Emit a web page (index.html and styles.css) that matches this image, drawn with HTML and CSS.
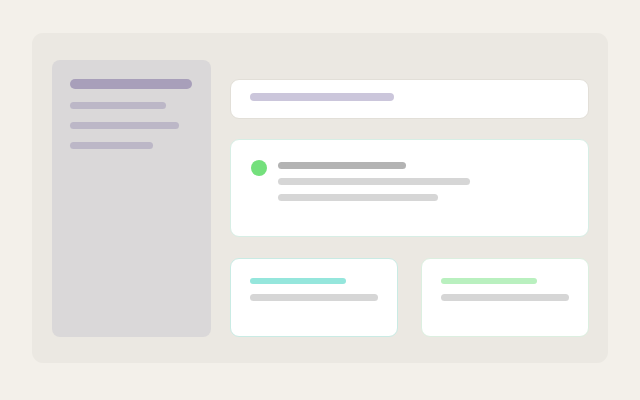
FILE: index.html
```html
<!DOCTYPE html>
<html>
<head>
<meta charset="utf-8">
<link rel="stylesheet" href="styles.css">
</head>
<body>
<div class="panel">
  <aside class="sidebar">
    <div class="bar side-title"></div>
    <div class="bar side-item w1"></div>
    <div class="bar side-item w2"></div>
    <div class="bar side-item w3"></div>
  </aside>
  <main class="main">
    <div class="card header-card">
      <div class="bar header-bar"></div>
    </div>
    <div class="card feature-card">
      <div class="dot"></div>
      <div class="lines">
        <div class="bar line-dark"></div>
        <div class="bar line-light lw1"></div>
        <div class="bar line-light lw2"></div>
      </div>
    </div>
    <div class="row">
      <div class="card small-card teal">
        <div class="bar accent accent-teal"></div>
        <div class="bar line-light sw"></div>
      </div>
      <div class="card small-card green">
        <div class="bar accent accent-green"></div>
        <div class="bar line-light sw"></div>
      </div>
    </div>
  </main>
</div>
</body>
</html>
```
FILE: styles.css
```css
* { box-sizing: border-box; }
html, body { margin: 0; padding: 0; }
body {
  background: #f3f0ea;
  width: 640px;
  height: 400px;
  padding: 33px 0 0 32px;
  font-family: "Liberation Sans", sans-serif;
}
.panel {
  width: 576px;
  height: 330px;
  background: #ebe8e2;
  border-radius: 11px;
  padding: 27px 19px 26px 20px;
  display: flex;
  gap: 19px;
}
.sidebar {
  width: 159px;
  flex: none;
  background: #dad8d9;
  border-radius: 8px;
  padding: 19px 18px;
  display: flex;
  flex-direction: column;
}
.bar { border-radius: 4px; }
.side-title { height: 10px; width: 122px; background: #a89fba; border-radius: 5px; }
.side-item { height: 7px; background: #bcb7c7; margin-top: 13px; }
.w1 { width: 96px; }
.w2 { width: 109px; }
.w3 { width: 83px; }
.main {
  flex: 1;
  display: flex;
  flex-direction: column;
  padding-top: 19px;
}
.card {
  background: #ffffff;
  border: 1px solid #e2dfd8;
  border-radius: 9px;
}
.header-card {
  height: 40px;
  padding: 13px 19px;
}
.header-bar { height: 8px; width: 144px; background: #cbc6db; }
.feature-card {
  height: 98px;
  margin-top: 20px;
  border-color: #d7eee5;
  padding: 20px 20px;
  display: flex;
  gap: 11px;
}
.dot {
  width: 16px; height: 16px;
  border-radius: 50%;
  background: #74e07c;
  flex: none;
}
.lines { display: flex; flex-direction: column; padding-top: 2px; }
.line-dark { height: 7px; width: 128px; background: #b3b3b3; }
.line-light { height: 7px; background: #d6d6d6; }
.lines .line-light { margin-top: 9px; }
.lw1 { width: 192px; }
.lw2 { width: 160px; }
.row {
  display: flex;
  gap: 23px;
  margin-top: 21px;
  height: 79px;
}
.small-card {
  flex: 1;
  padding: 19px 19px;
  display: flex;
  flex-direction: column;
}
.teal { border-color: #c9ebe4; }
.green { border-color: #dcefe0; }
.accent { height: 6px; width: 96px; }
.accent-teal { background: #95e6dc; }
.accent-green { background: #b9f0bf; }
.sw { width: 128px; margin-top: 10px; }
```
